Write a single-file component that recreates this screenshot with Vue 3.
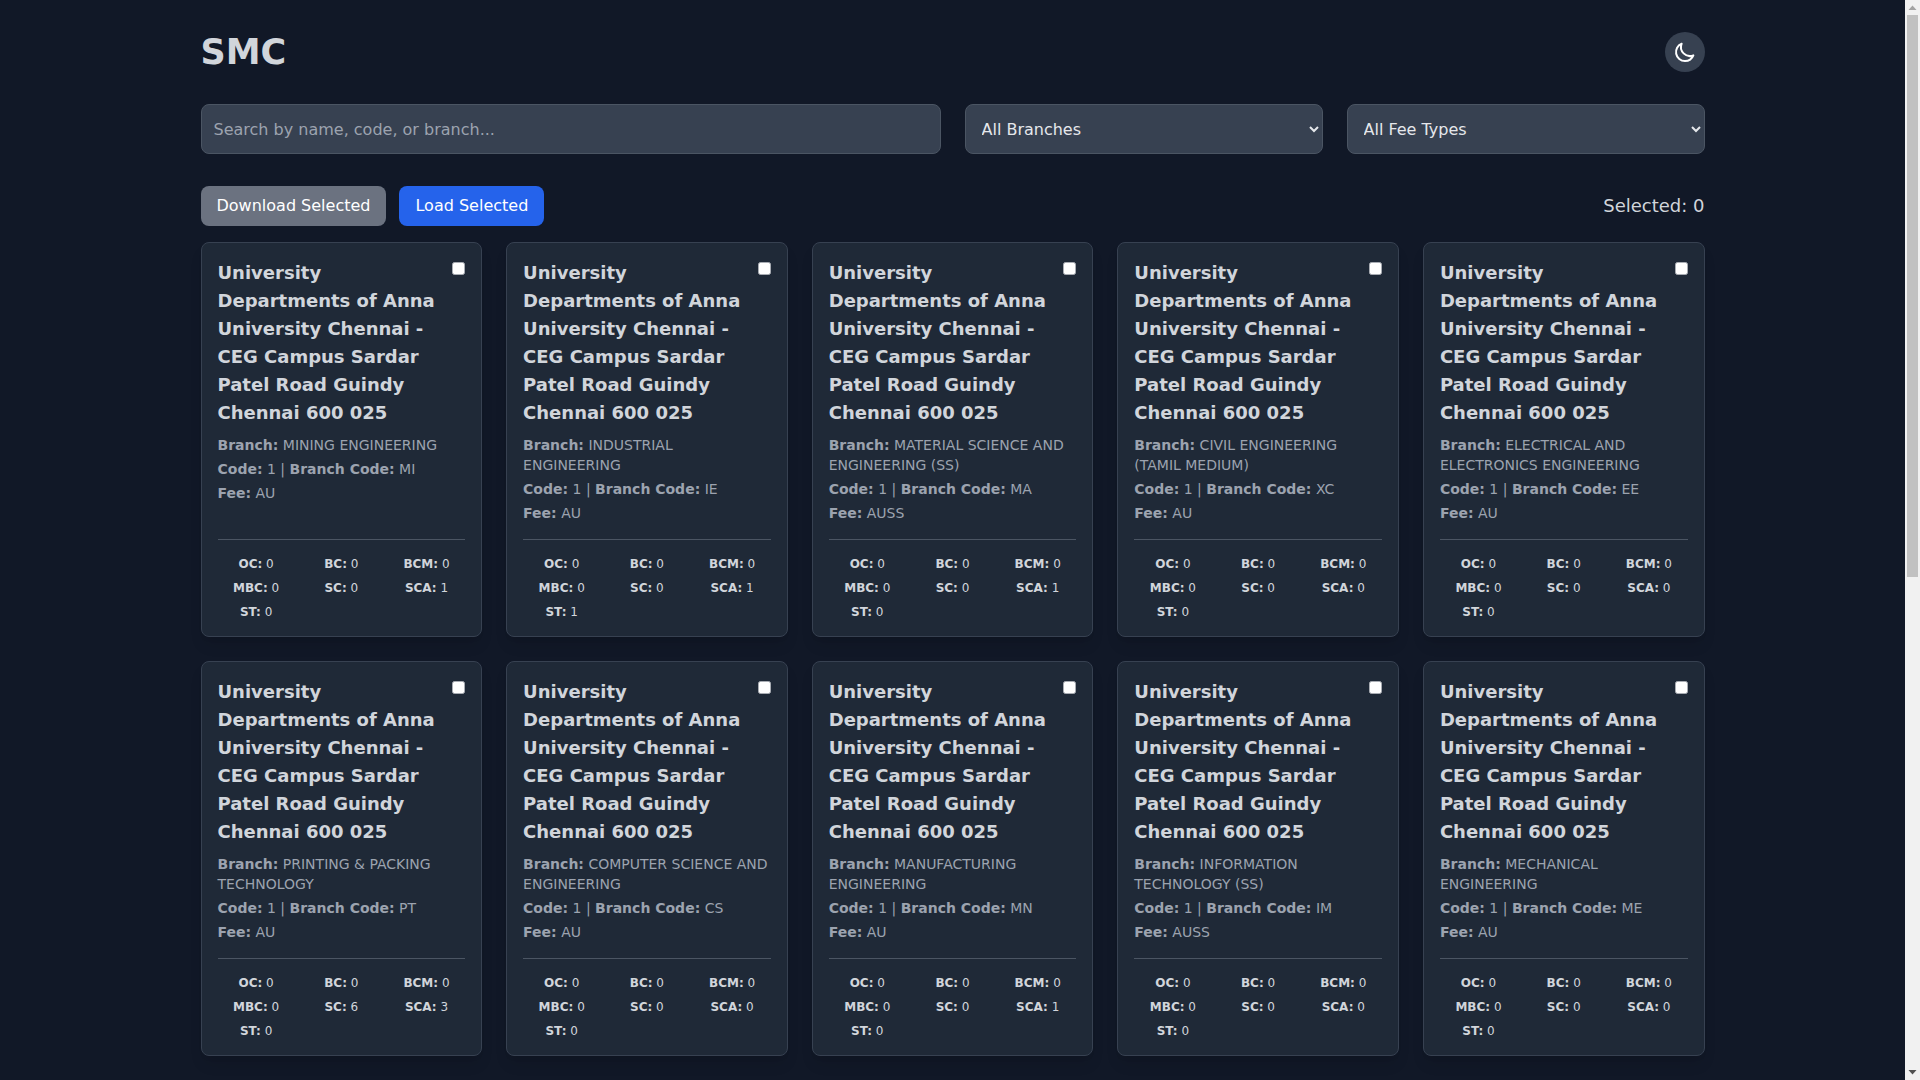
<template>
  <div class="shell">
    <div class="page">
      <!-- Cabeçalho -->
      <header class="top">
        <h1 class="logo">SMC</h1>
        <button class="theme-btn" type="button" aria-label="Toggle theme">
          <svg width="24" height="24" viewBox="0 0 24 24" fill="none" stroke="currentColor" stroke-width="2">
            <path stroke-linecap="round" stroke-linejoin="round" d="M20.354 15.354A9 9 0 018.646 3.646 9.003 9.003 0 0012 21a9.003 9.003 0 008.354-5.646z" />
          </svg>
        </button>
      </header>

      <!-- Filtros -->
      <div class="filters">
        <input class="field search" type="text" placeholder="Search by name, code, or branch..." />
        <select class="field pick">
          <option>All Branches</option>
        </select>
        <select class="field pick">
          <option>All Fee Types</option>
        </select>
      </div>

      <div class="actions">
        <div class="action-btns">
          <button class="btn btn-gray" type="button">Download Selected</button>
          <button class="btn btn-blue" type="button">Load Selected</button>
        </div>
        <span class="count">Selected: 0</span>
      </div>

      <!-- Cartões -->
      <div class="grid">
        <article v-for="c in cards" :key="c.bc" class="card">
          <div class="card-head">
            <h2 class="card-title">{{ college }}</h2>
            <input class="check" type="checkbox" />
          </div>
          <p class="meta"><strong>Branch:</strong> {{ c.branch }}</p>
          <p class="meta"><strong>Code:</strong> 1 | <strong>Branch Code:</strong> {{ c.bc }}</p>
          <p class="meta"><strong>Fee:</strong> {{ c.fee }}</p>
          <div class="seats">
            <div v-for="(v, k) in c.seats" :key="k"><strong>{{ k }}:</strong> {{ v }}</div>
          </div>
        </article>
      </div>
    </div>

    <!-- Barra de rolagem da janela, desenhada porque o navegador headless não mostra a sua -->
    <div class="scrollbar" aria-hidden="true">
      <svg class="arrow" width="15" height="15" viewBox="0 0 15 15"><path d="M3.5 10h8L7.5 5.5z" fill="#a3a3a3" /></svg>
      <div class="thumb"></div>
      <svg class="arrow arrow-down" width="15" height="15" viewBox="0 0 15 15"><path d="M3.5 5h8L7.5 9.5z" fill="#505050" /></svg>
    </div>
  </div>
</template>

<script setup>
const college = 'University Departments of Anna University Chennai - CEG Campus Sardar Patel Road Guindy Chennai 600 025'

function seats(OC, BC, BCM, MBC, SC, SCA, ST) {
  return { OC, BC, BCM, MBC, SC, SCA, ST }
}

const cards = [
  { branch: 'MINING ENGINEERING', bc: 'MI', fee: 'AU', seats: seats(0, 0, 0, 0, 0, 1, 0) },
  { branch: 'INDUSTRIAL ENGINEERING', bc: 'IE', fee: 'AU', seats: seats(0, 0, 0, 0, 0, 1, 1) },
  { branch: 'MATERIAL SCIENCE AND ENGINEERING (SS)', bc: 'MA', fee: 'AUSS', seats: seats(0, 0, 0, 0, 0, 1, 0) },
  { branch: 'CIVIL ENGINEERING (TAMIL MEDIUM)', bc: 'XC', fee: 'AU', seats: seats(0, 0, 0, 0, 0, 0, 0) },
  { branch: 'ELECTRICAL AND ELECTRONICS ENGINEERING', bc: 'EE', fee: 'AU', seats: seats(0, 0, 0, 0, 0, 0, 0) },
  { branch: 'PRINTING & PACKING TECHNOLOGY', bc: 'PT', fee: 'AU', seats: seats(0, 0, 0, 0, 6, 3, 0) },
  { branch: 'COMPUTER SCIENCE AND ENGINEERING', bc: 'CS', fee: 'AU', seats: seats(0, 0, 0, 0, 0, 0, 0) },
  { branch: 'MANUFACTURING ENGINEERING', bc: 'MN', fee: 'AU', seats: seats(0, 0, 0, 0, 0, 1, 0) },
  { branch: 'INFORMATION TECHNOLOGY (SS)', bc: 'IM', fee: 'AUSS', seats: seats(0, 0, 0, 0, 0, 0, 0) },
  { branch: 'MECHANICAL ENGINEERING', bc: 'ME', fee: 'AU', seats: seats(0, 0, 0, 0, 0, 0, 0) }
]
</script>

<style>
html, body {
  margin: 0;
  background: #111827;
}
</style>

<style scoped>
.shell {
  padding-right: 15px;
}
.page {
  box-sizing: border-box;
  max-width: 1536px;
  margin: 0 auto;
  padding: 32px 16px 24px;
  font-family: "DejaVu Sans", sans-serif;
  color: #d1d5db;
}

.top {
  display: flex;
  justify-content: space-between;
  align-items: center;
  margin-bottom: 32px;
}
.logo {
  margin: 0;
  font-size: 35px;
  line-height: 40px;
  font-weight: 700;
}
.theme-btn {
  display: flex;
  align-items: center;
  justify-content: center;
  width: 40px;
  height: 40px;
  padding: 0;
  border: 0;
  border-radius: 50%;
  background: #374151;
  color: #fff;
}

.filters {
  display: flex;
  gap: 24px;
  margin-bottom: 32px;
}
.field {
  box-sizing: border-box;
  height: 50px;
  padding: 12px;
  border: 1px solid #4b5563;
  border-radius: 8px;
  background: #374151;
  color: #e5e7eb;
  font-family: inherit;
  font-size: 16px;
  line-height: 24px;
}
.search {
  flex: 1;
  min-width: 0;
}
.search::placeholder {
  color: #9ca3af;
}
.pick {
  width: 358px;
  flex: none;
}

.actions {
  display: flex;
  justify-content: space-between;
  align-items: center;
  margin-bottom: 16px;
}
.action-btns {
  display: flex;
  gap: 13px;
}
.btn {
  height: 40px;
  padding: 8px 16px;
  border: 0;
  border-radius: 8px;
  color: #fff;
  font-family: inherit;
  font-size: 16px;
  line-height: 24px;
}
.btn-gray { background: #6b7280; }
.btn-blue { background: #2563eb; }
.count {
  font-size: 18px;
  line-height: 28px;
}

.grid {
  display: grid;
  grid-template-columns: repeat(5, minmax(0, 1fr));
  gap: 24px;
}
.card {
  display: flex;
  flex-direction: column;
  padding: 16px;
  border: 1px solid #374151;
  border-radius: 8px;
  background: #1f2937;
  box-shadow: 0 10px 15px -3px rgba(0, 0, 0, .1), 0 4px 6px -4px rgba(0, 0, 0, .1);
}
.card-head {
  display: flex;
  justify-content: space-between;
  align-items: flex-start;
  margin-bottom: 8px;
}
.card-title {
  margin: 0;
  font-size: 18px;
  line-height: 28px;
  font-weight: 700;
}
.check {
  appearance: none;
  box-sizing: border-box;
  flex: none;
  width: 13px;
  height: 13px;
  margin: 3px 0 0 8px;
  border: 1px solid #a8acb3;
  border-radius: 2.5px;
  background: #fff;
}
.meta {
  margin: 0 0 4px;
  font-size: 14px;
  line-height: 20px;
  color: #9ca3af;
}
.card .meta:last-of-type {
  margin-bottom: 16px;
}
.seats {
  display: grid;
  grid-template-columns: repeat(3, minmax(0, 1fr));
  gap: 8px;
  margin-top: auto;
  padding-top: 16px;
  border-top: 1px solid #4b5563;
  font-size: 12px;
  line-height: 16px;
  text-align: center;
}

.scrollbar {
  position: fixed;
  top: 0;
  right: 0;
  bottom: 0;
  width: 15px;
  display: flex;
  flex-direction: column;
  background: #f1f1f1;
}
.arrow {
  display: block;
  flex: none;
}
.arrow-down {
  margin-top: auto;
}
.thumb {
  width: 11px;
  height: 562px;
  margin-left: 2px;
  background: #c1c1c1;
}
</style>
